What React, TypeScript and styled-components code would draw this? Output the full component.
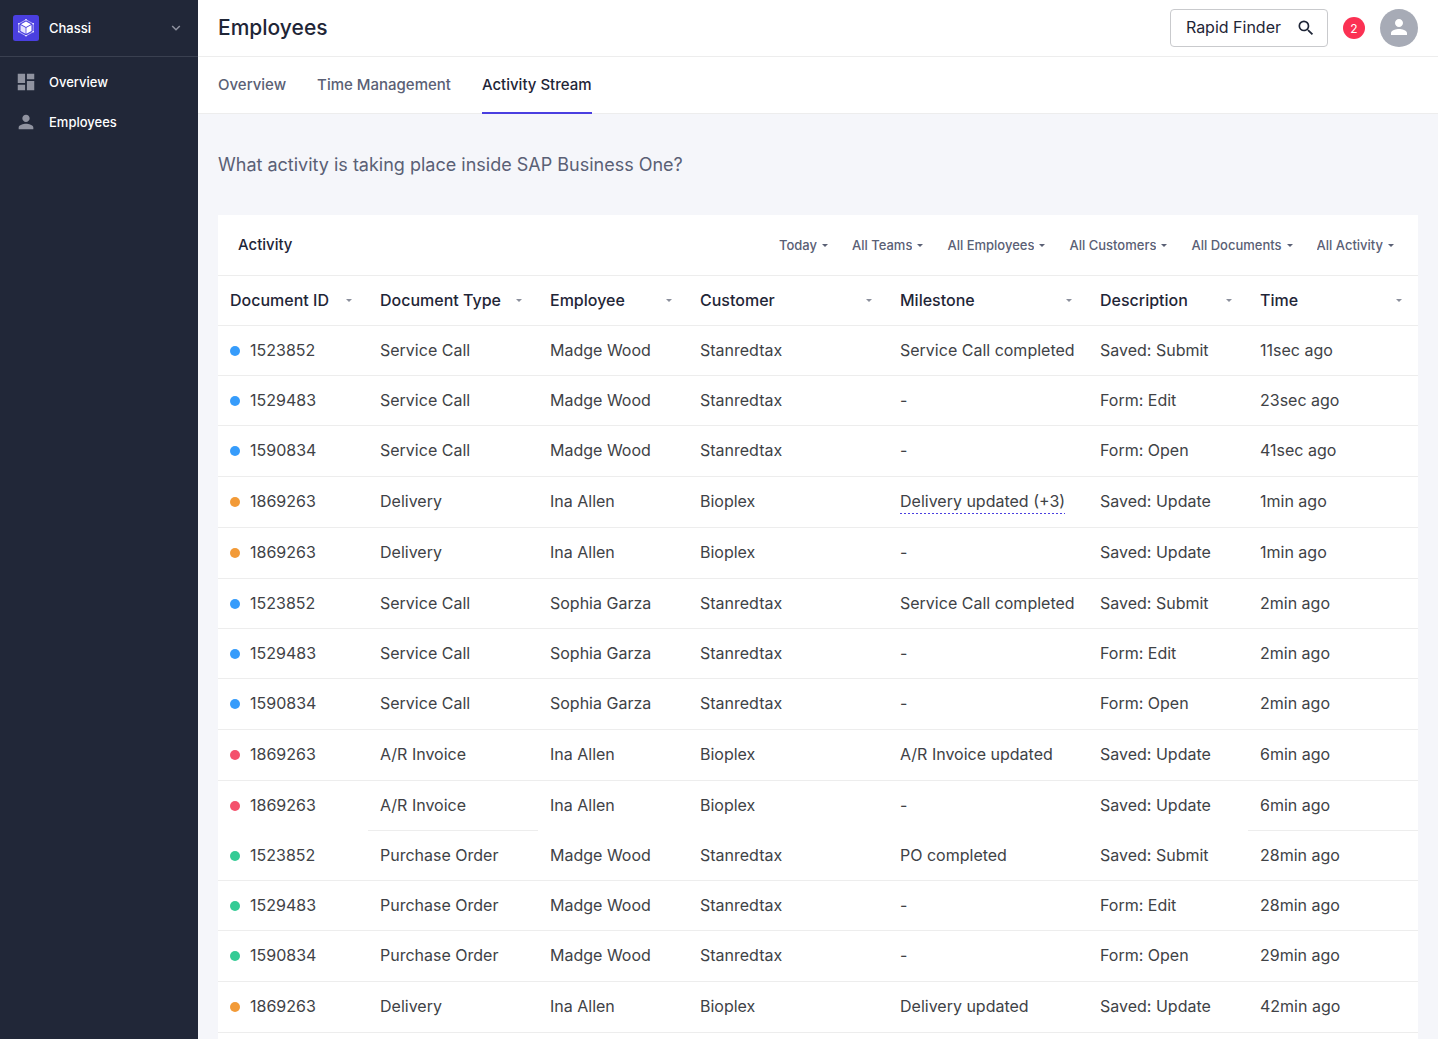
import React from "react";
import styled, { createGlobalStyle } from "styled-components";
import { MdDashboard, MdPerson, MdSearch } from "react-icons/md";

const color = {
  navy: "#212738",
  ink: "#1f2637",
  slate: "#5a6075",
  body: "#404246",
  line: "#ededed",
  accent: "#4a3fe0",
  page: "#f5f6fa",
};

const GlobalStyle = createGlobalStyle`
  *, *::before, *::after { box-sizing: border-box; }
  body {
    margin: 0;
    background: ${color.page};
    color: ${color.ink};
    font-family: Inter, "Liberation Sans", sans-serif;
    font-size: 16px;
  }
  button, select { font: inherit; color: inherit; }
`;

const Layout = styled.div`
  display: flex;
  min-height: 100vh;
`;

const Sidebar = styled.aside`
  flex: 0 0 198px;
  background: ${color.navy};
  color: #fff;
  font-size: 13px;
  font-weight: 500;
`;

const Workspace = styled.button`
  display: flex;
  align-items: center;
  gap: 10px;
  width: 100%;
  height: 57px;
  padding: 0 17px 0 13px;
  border: 0;
  border-bottom: 1px solid #3a4050;
  background: none;
  text-align: left;
  cursor: pointer;
`;

const WorkspaceName = styled.span`
  flex: 1;
`;

const NavList = styled.nav`
  display: flex;
  flex-direction: column;
  padding-top: 5px;
`;

const NavLink = styled.a`
  display: flex;
  align-items: center;
  gap: 10px;
  height: 40px;
  padding-left: 13px;
  color: inherit;
  text-decoration: none;
`;

const NavIcon = styled.span`
  display: flex;
  justify-content: center;
  width: 26px;
  color: #9093a0;
`;

const Main = styled.main`
  flex: 1;
  min-width: 0;
  display: flex;
  flex-direction: column;
`;

const TopBar = styled.header`
  display: flex;
  align-items: center;
  gap: 15px;
  height: 57px;
  padding: 0 20px;
  background: #fff;
  border-bottom: 1px solid ${color.line};
`;

const Title = styled.h1`
  flex: 1;
  margin: 0;
  padding-bottom: 2px;
  font-size: 21px;
  font-weight: 500;
`;

const FinderButton = styled.button`
  display: flex;
  align-items: center;
  gap: 15px;
  height: 38px;
  padding: 0 11px 0 15px;
  border: 1px solid #c9cacd;
  border-radius: 4px;
  background: #fff;
  cursor: pointer;
`;

const FinderLabel = styled.span`
  padding-bottom: 2px;
`;

const Badge = styled.span`
  display: grid;
  place-items: center;
  width: 22px;
  height: 22px;
  border-radius: 50%;
  background: #fb3153;
  color: #fff;
  font-size: 12px;
`;

const Avatar = styled.button`
  display: grid;
  place-items: center;
  width: 38px;
  height: 38px;
  padding: 0 0 2px;
  border: 0;
  border-radius: 50%;
  background: #a7abb6;
  color: #fff;
  cursor: pointer;
`;

const Tabs = styled.nav`
  display: flex;
  gap: 31px;
  height: 57px;
  padding: 0 20px;
  background: #fff;
  border-bottom: 1px solid ${color.line};
`;

const Tab = styled.a<{ $active?: boolean }>`
  display: flex;
  align-items: center;
  height: 57px;
  border-bottom: 2px solid ${(p) => (p.$active ? color.accent : "transparent")};
  color: ${(p) => (p.$active ? color.ink : color.slate)};
  font-size: 15px;
  font-weight: 500;
  text-decoration: none;
`;

const Content = styled.div`
  flex: 1;
  display: flex;
  flex-direction: column;
  gap: 38px;
  padding: 39px 20px 0;
`;

const Question = styled.p`
  margin: 0;
  color: ${color.slate};
  font-size: 18px;
  line-height: 24px;
`;

const Card = styled.section`
  flex: 1;
  background: #fff;
`;

const CardHeader = styled.div`
  display: flex;
  align-items: center;
  justify-content: space-between;
  height: 61px;
  padding: 0 24px 0 20px;
  border-bottom: 1px solid ${color.line};
`;

const CardTitle = styled.h2`
  margin: 0;
  padding-bottom: 2px;
  font-size: 15px;
  font-weight: 500;
`;

const Filters = styled.div`
  display: flex;
  gap: 24px;
  color: ${color.slate};
`;

const Filter = styled.label`
  display: flex;
  align-items: center;
  gap: 5px;
`;

const FilterSelect = styled.select`
  appearance: none;
  field-sizing: content;
  padding: 0;
  border: 0;
  background: none;
  font-size: 13px;
  font-weight: 500;
  cursor: pointer;
`;

const Table = styled.table`
  width: 100%;
  table-layout: fixed;
  border-collapse: separate;
  border-spacing: 0;
`;

const HeadCell = styled.th<{ $width: number }>`
  width: ${(p) => p.$width}px;
  height: 50px;
  padding: 0 16px 2px 12px;
  border-bottom: 1px solid ${color.line};
  font-weight: 500;
  text-align: left;
`;

const SortButton = styled.button`
  display: flex;
  align-items: center;
  justify-content: space-between;
  width: 100%;
  padding: 0;
  border: 0;
  background: none;
  white-space: nowrap;
  cursor: pointer;
  svg {
    margin-top: 2px;
    color: #8b8f9c;
  }
`;

const Row = styled.tr<{ $tall?: boolean }>`
  height: ${(p) => (p.$tall ? 51 : 50)}px;
`;

const Cell = styled.td<{ $open?: boolean }>`
  padding: 12px 0 0 12px;
  border-bottom: 1px solid ${(p) => (p.$open ? "transparent" : color.line)};
  color: ${color.body};
  line-height: 24px;
  vertical-align: top;
  white-space: nowrap;
`;

const DocumentId = styled.span`
  display: flex;
  align-items: center;
  gap: 10px;
`;

const Dot = styled.span<{ $kind: Kind }>`
  width: 10px;
  height: 10px;
  margin-top: 2px;
  border-radius: 50%;
  background: ${(p) => dotColors[p.$kind]};
`;

const MoreLink = styled.a`
  display: inline-block;
  padding-bottom: 1px;
  background: repeating-linear-gradient(90deg, ${color.accent} 0 2px, transparent 2px 4px) left bottom / 100% 1px no-repeat;
  color: inherit;
  text-decoration: none;
`;

type Kind = "Service Call" | "Delivery" | "A/R Invoice" | "Purchase Order";

const dotColors: Record<Kind, string> = {
  "Service Call": "#369cfb",
  Delivery: "#f29a37",
  "A/R Invoice": "#f4516c",
  "Purchase Order": "#34cb95",
};

type Entry = {
  id: string;
  kind: Kind;
  employee: string;
  customer: string;
  milestone: string;
  description: string;
  time: string;
  tall?: boolean;
  grouped?: boolean;
  more?: boolean;
};

const service = { kind: "Service Call" as Kind, customer: "Stanredtax" };
const order = { kind: "Purchase Order" as Kind, customer: "Stanredtax", employee: "Madge Wood" };
const ina = { id: "1869263", employee: "Ina Allen", customer: "Bioplex", description: "Saved: Update" };

const entries: Entry[] = [
  { ...service, id: "1523852", employee: "Madge Wood", milestone: "Service Call completed", description: "Saved: Submit", time: "11sec ago" },
  { ...service, id: "1529483", employee: "Madge Wood", milestone: "-", description: "Form: Edit", time: "23sec ago" },
  { ...service, id: "1590834", employee: "Madge Wood", milestone: "-", description: "Form: Open", time: "41sec ago", tall: true },
  { ...ina, kind: "Delivery", milestone: "Delivery updated (+3)", time: "1min ago", tall: true, more: true },
  { ...ina, kind: "Delivery", milestone: "-", time: "1min ago", tall: true },
  { ...service, id: "1523852", employee: "Sophia Garza", milestone: "Service Call completed", description: "Saved: Submit", time: "2min ago" },
  { ...service, id: "1529483", employee: "Sophia Garza", milestone: "-", description: "Form: Edit", time: "2min ago" },
  { ...service, id: "1590834", employee: "Sophia Garza", milestone: "-", description: "Form: Open", time: "2min ago", tall: true },
  { ...ina, kind: "A/R Invoice", milestone: "A/R Invoice updated", time: "6min ago", tall: true },
  { ...ina, kind: "A/R Invoice", milestone: "-", time: "6min ago", grouped: true },
  { ...order, id: "1523852", milestone: "PO completed", description: "Saved: Submit", time: "28min ago" },
  { ...order, id: "1529483", milestone: "-", description: "Form: Edit", time: "28min ago" },
  { ...order, id: "1590834", milestone: "-", description: "Form: Open", time: "29min ago", tall: true },
  { ...ina, kind: "Delivery", milestone: "Delivery updated", time: "42min ago", tall: true },
];

const columns = [
  { label: "Document ID", width: 150 },
  { label: "Document Type", width: 170 },
  { label: "Employee", width: 150 },
  { label: "Customer", width: 200 },
  { label: "Milestone", width: 200 },
  { label: "Description", width: 160 },
  { label: "Time", width: 170 },
];

const filters = ["Today", "All Teams", "All Employees", "All Customers", "All Documents", "All Activity"];
const tabs = ["Overview", "Time Management", "Activity Stream"];

const Caret = () => (
  <svg width="6" height="3" viewBox="0 0 6 3" fill="currentColor" aria-hidden="true">
    <path d="M0 0h6L3 3z" />
  </svg>
);

const Chevron = () => (
  <svg width="10" height="8" viewBox="0 0 10 8" fill="none" stroke="#9093a0" strokeWidth="1.5" aria-hidden="true">
    <path d="M1.2 2 5 5.8 8.8 2" />
  </svg>
);

const Logo = () => (
  <svg width="26" height="26" viewBox="0 0 26 26" fill="none" aria-hidden="true">
    <rect width="26" height="26" rx="2.5" fill="#4a3fe0" />
    <path d="M13 4.800 20.200 8.800v8L13 20.800 5.800 16.800v-8z" stroke="#cfccfa" strokeWidth="0.8" />
    <path d="M13 6.600 18 9.200 13 11.900 8 9.200z" fill="#fff" />
    <path d="M7.500 10 12.600 12.800V18.800L7.500 16z" fill="#e4e2fd" />
    <path d="M18.500 10 13.400 12.800V18.800L18.500 16z" fill="#fff" />
    <g fill="#fff">
      <circle cx="13" cy="4.800" r="0.8" />
      <circle cx="20.200" cy="8.800" r="0.8" />
      <circle cx="20.200" cy="16.800" r="0.8" />
      <circle cx="13" cy="20.800" r="0.8" />
      <circle cx="5.800" cy="16.800" r="0.8" />
      <circle cx="5.800" cy="8.800" r="0.8" />
    </g>
  </svg>
);

export default function App() {
  return (
    <>
      <GlobalStyle />
      <Layout>
        <Sidebar>
          <Workspace type="button">
            <Logo />
            <WorkspaceName>Chassi</WorkspaceName>
            <Chevron />
          </Workspace>
          <NavList>
            <NavLink href="#overview">
              <NavIcon><MdDashboard size={22} /></NavIcon>
              Overview
            </NavLink>
            <NavLink href="#employees">
              <NavIcon><MdPerson size={22} /></NavIcon>
              Employees
            </NavLink>
          </NavList>
        </Sidebar>
        <Main>
          <TopBar>
            <Title>Employees</Title>
            <FinderButton type="button">
              <FinderLabel>Rapid Finder</FinderLabel>
              <MdSearch size={20} />
            </FinderButton>
            <Badge>2</Badge>
            <Avatar type="button" aria-label="Account">
              <MdPerson size={24} />
            </Avatar>
          </TopBar>
          <Tabs>
            {tabs.map((tab) => (
              <Tab key={tab} href="#" $active={tab === "Activity Stream"}>{tab}</Tab>
            ))}
          </Tabs>
          <Content>
            <Question>What activity is taking place inside SAP Business One?</Question>
            <Card>
              <CardHeader>
                <CardTitle>Activity</CardTitle>
                <Filters>
                  {filters.map((name) => (
                    <Filter key={name}>
                      <FilterSelect aria-label={name}>
                        <option>{name}</option>
                      </FilterSelect>
                      <Caret />
                    </Filter>
                  ))}
                </Filters>
              </CardHeader>
              <Table>
                <thead>
                  <tr>
                    {columns.map((column) => (
                      <HeadCell key={column.label} $width={column.width}>
                        <SortButton type="button">
                          {column.label}
                          <Caret />
                        </SortButton>
                      </HeadCell>
                    ))}
                  </tr>
                </thead>
                <tbody>
                  {entries.map((entry, index) => (
                    <Row key={index} $tall={entry.tall}>
                      <Cell $open={entry.grouped}>
                        <DocumentId>
                          <Dot $kind={entry.kind} />
                          {entry.id}
                        </DocumentId>
                      </Cell>
                      <Cell>{entry.kind}</Cell>
                      <Cell $open={entry.grouped}>{entry.employee}</Cell>
                      <Cell $open={entry.grouped}>{entry.customer}</Cell>
                      <Cell $open={entry.grouped}>
                        {entry.more ? <MoreLink href="#">{entry.milestone}</MoreLink> : entry.milestone}
                      </Cell>
                      <Cell $open={entry.grouped}>{entry.description}</Cell>
                      <Cell>{entry.time}</Cell>
                    </Row>
                  ))}
                </tbody>
              </Table>
            </Card>
          </Content>
        </Main>
      </Layout>
    </>
  );
}
